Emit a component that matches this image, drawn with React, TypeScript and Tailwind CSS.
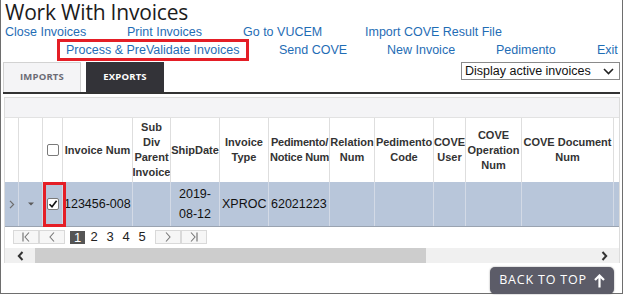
import React from "react";

const cols = "grid-cols-[14px_24px_20px_70px_38px_49px_49px_61px_45px_59px_32px_56px_92px_5px]";

function Check({ checked }: { checked?: boolean }) {
  return (
    <div className="w-[12px] h-[12px] border border-[#7a7a7a] rounded-[2px] bg-white flex items-center justify-center">
      {checked && (
        <svg width="10" height="10" viewBox="0 0 10 10">
          <path d="M1.5 5.2 L4 7.8 L8.6 1.8" fill="none" stroke="#111" strokeWidth="1.6" />
        </svg>
      )}
    </div>
  );
}

function PagerBtn({ kind }: { kind: "first" | "prev" | "next" | "last" }) {
  return (
    <div className="w-[26px] h-[14px] border border-[#d9d9d9] bg-[#f6f6f6] flex items-center justify-center">
      <svg width="12" height="10" viewBox="0 0 12 10">
        {kind === "first" && (
          <>
            <path d="M3 0.5 V9.5" stroke="#777" strokeWidth="1.2" />
            <path d="M9 0.5 L5 5 L9 9.5" fill="none" stroke="#777" strokeWidth="1.1" />
          </>
        )}
        {kind === "prev" && <path d="M8 0.5 L4 5 L8 9.5" fill="none" stroke="#777" strokeWidth="1.1" />}
        {kind === "next" && <path d="M4 0.5 L8 5 L4 9.5" fill="none" stroke="#777" strokeWidth="1.1" />}
        {kind === "last" && (
          <>
            <path d="M3 0.5 L7 5 L3 9.5" fill="none" stroke="#777" strokeWidth="1.1" />
            <path d="M9 0.5 V9.5" stroke="#777" strokeWidth="1.2" />
          </>
        )}
      </svg>
    </div>
  );
}

export default function App() {
  const hdr = "border-r border-[#dedede] flex items-center justify-center text-center text-[11px] leading-[15px] font-bold text-[#333] whitespace-nowrap overflow-hidden";
  const cell = "border-r border-[#d3dae6] flex items-center text-[12.5px] text-[#111] whitespace-nowrap";
  return (
    <div className="relative w-[624px] h-[295px] bg-white overflow-hidden font-['Liberation_Sans',Arial,sans-serif]">
      <div className="w-[623px] h-[294px] border-l border-r border-b border-[#6e6e6e] flex flex-col">
        <div className="h-[23px] pl-[4px] text-[21px] leading-[24px] tracking-[-0.2px] text-[#1c1c1c] font-['Open_Sans',sans-serif] whitespace-nowrap">
          Work With Invoices
        </div>
        <div className="h-[18px] flex items-center pl-[4px] text-[12.5px] leading-[15px] text-[#1f6db5] whitespace-nowrap">
          <span className="w-[122px]">Close Invoices</span>
          <span className="w-[116px]">Print Invoices</span>
          <span className="w-[122px]">Go to VUCEM</span>
          <span>Import COVE Result File</span>
        </div>
        <div className="h-[18px] flex items-center pl-[65px] text-[12.5px] leading-[15px] text-[#1f6db5] whitespace-nowrap">
          <span className="w-[213px]">Process &amp; PreValidate Invoices</span>
          <span className="w-[108px]">Send COVE</span>
          <span className="w-[109px]">New Invoice</span>
          <span className="w-[101px]">Pedimento</span>
          <span>Exit</span>
        </div>
        <div className="mt-[3px] h-[30px] flex items-start">
          <div className="ml-[2px] w-[78px] h-[30px] border border-b-0 border-[#d2d2d2] bg-[#f4f4f6] flex items-center justify-center text-[9.5px] font-bold text-[#6b6b75] font-['Open_Sans',sans-serif] tracking-[0.2px]">
            IMPORTS
          </div>
          <div className="ml-[5px] w-[78px] h-[30px] bg-[#333338] flex items-center justify-center text-[9.5px] font-bold text-white font-['Open_Sans',sans-serif] tracking-[0.2px]">
            EXPORTS
          </div>
          <div className="ml-auto mr-[2px] w-[159px] h-[18px] border border-[#8a8a8a] bg-white flex items-center pl-[3px] pr-[5px] text-[12.5px] text-[#111]">
            <span className="flex-1">Display active invoices</span>
            <svg width="11" height="7" viewBox="0 0 11 7">
              <path d="M1 1 L5.5 5.5 L10 1" fill="none" stroke="#222" strokeWidth="1.6" />
            </svg>
          </div>
        </div>
        <div className="ml-[2px] w-[617px] h-[2px] bg-[#333]" />
        <div className="mt-[3px] ml-[3px] w-[616px] border border-[#dcdcdc] border-b-0 flex flex-col">
          <div className="h-[20px] bg-[#f4f4f6] border-b border-[#e2e2e2]" />
          <div className={`grid ${cols} h-[64px] bg-white`}>
            <div className={hdr} />
            <div className={hdr} />
            <div className={hdr}><Check /></div>
            <div className={hdr}>Invoice Num</div>
            <div className={hdr}>Sub<br />Div<br />Parent<br />Invoice</div>
            <div className={hdr}>ShipDate</div>
            <div className={hdr}>Invoice<br />Type</div>
            <div className={`${hdr} justify-start pl-[1px] tracking-[-0.2px]`}>Pedimento/<br />Notice Num</div>
            <div className={hdr}>Relation<br />Num</div>
            <div className={hdr}>Pedimento<br />Code</div>
            <div className={hdr}>COVE<br />User</div>
            <div className={hdr}>COVE<br />Operation<br />Num</div>
            <div className={hdr}>COVE Document<br />Num</div>
            <div />
          </div>
          <div className={`grid ${cols} h-[45px] bg-[#b8c6da] border-b border-[#9aa3b0]`}>
            <div className={`${cell} justify-center`}>
              <svg width="6" height="9" viewBox="0 0 6 9">
                <path d="M1 0.8 L4.6 4.5 L1 8.2" fill="none" stroke="#6d6d6d" strokeWidth="1.2" />
              </svg>
            </div>
            <div className={`${cell} justify-center`}>
              <svg width="6" height="4" viewBox="0 0 6 4">
                <path d="M0 0.5 H6 L3 3.5 Z" fill="#5a5a5a" />
              </svg>
            </div>
            <div className={`${cell} justify-center`}><Check checked /></div>
            <div className={`${cell} pl-[1px]`}>123456-008</div>
            <div className={cell} />
            <div className={`${cell} justify-center text-center leading-[20px]`}>2019-<br />08-12</div>
            <div className={`${cell} pl-[2px]`}>XPROC</div>
            <div className={`${cell} pl-[2px]`}>62021223</div>
            <div className={cell} />
            <div className={cell} />
            <div className={cell} />
            <div className={cell} />
            <div className={cell} />
            <div />
          </div>
          <div className="h-[20px] flex items-center pl-[8px] text-[13px] text-[#222]">
            <PagerBtn kind="first" />
            <PagerBtn kind="prev" />
            <div className="ml-[5px] w-[15px] h-[13px] bg-[#555] text-white flex items-center justify-center leading-[13px]">1</div>
            <span className="w-[16px] text-center ml-[1px]">2</span>
            <span className="w-[16px] text-center">3</span>
            <span className="w-[16px] text-center">4</span>
            <span className="w-[16px] text-center">5</span>
            <div className="ml-[5px] flex">
              <PagerBtn kind="next" />
              <PagerBtn kind="last" />
            </div>
          </div>
          <div className="mt-[1px] h-[15px] flex bg-[#f0f0f0]">
            <div className="w-[30px] flex items-center justify-center">
              <svg width="7" height="10" viewBox="0 0 7 10">
                <path d="M5.5 1 L1.8 5 L5.5 9" fill="none" stroke="#333" strokeWidth="2" />
              </svg>
            </div>
            <div className="w-[391px] bg-[#cdcdcd]" />
            <div className="flex-1" />
            <div className="w-[30px] flex items-center justify-center">
              <svg width="7" height="10" viewBox="0 0 7 10">
                <path d="M1.5 1 L5.2 5 L1.5 9" fill="none" stroke="#333" strokeWidth="2" />
              </svg>
            </div>
          </div>
        </div>
      </div>

      <div className="absolute left-[57px] top-[39px] w-[192px] h-[22px] border-[3px] border-[#e41e26]" />
      <div className="absolute left-[43px] top-[182px] w-[23px] h-[45px] border-[3px] border-[#e41e26]" />

      <div className="absolute left-[490px] top-[267px] w-[124px] h-[27px] rounded-[5px] bg-[#5c5c68] shadow-[0_0_2px_rgba(0,0,0,0.4)] flex items-center justify-center gap-[7px] text-white text-[12.5px] tracking-[0.8px] font-['Open_Sans',sans-serif]">
        <span>BACK TO TOP</span>
        <svg width="11" height="14" viewBox="0 0 11 14">
          <path d="M5.5 13.5 V2 M1 6 L5.5 1.5 L10 6" fill="none" stroke="#fff" strokeWidth="2.2" />
        </svg>
      </div>
    </div>
  );
}
